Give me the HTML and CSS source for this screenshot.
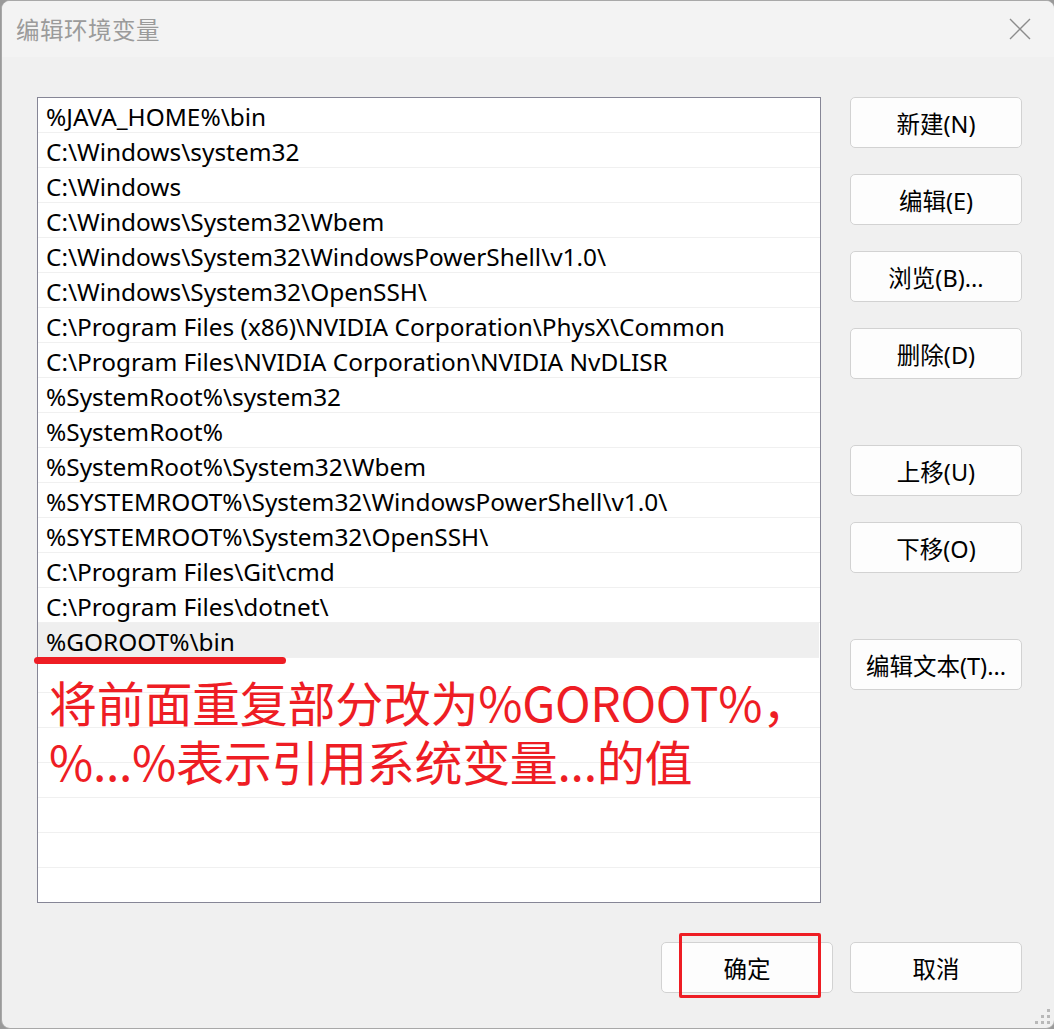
FILE: index.html
```html
<!DOCTYPE html>
<html lang="zh-CN">
<head>
<meta charset="utf-8">
<title>编辑环境变量</title>
<link rel="stylesheet" href="styles.css">
</head>
<body>
<div class="window">
  <div class="titlebar">
    <span class="title">编辑环境变量</span>
    <svg class="close" width="22" height="22" viewBox="0 0 22 22"><path d="M1 1 L21 21 M21 1 L1 21" stroke="#8c8c8c" stroke-width="1.4" fill="none"/></svg>
  </div>
  <div class="content">
    <div class="listwrap">
      <div class="list">
        <div class="row">%JAVA_HOME%\bin</div>
        <div class="row">C:\Windows\system32</div>
        <div class="row">C:\Windows</div>
        <div class="row">C:\Windows\System32\Wbem</div>
        <div class="row">C:\Windows\System32\WindowsPowerShell\v1.0\</div>
        <div class="row">C:\Windows\System32\OpenSSH\</div>
        <div class="row">C:\Program Files (x86)\NVIDIA Corporation\PhysX\Common</div>
        <div class="row">C:\Program Files\NVIDIA Corporation\NVIDIA NvDLISR</div>
        <div class="row">%SystemRoot%\system32</div>
        <div class="row">%SystemRoot%</div>
        <div class="row">%SystemRoot%\System32\Wbem</div>
        <div class="row">%SYSTEMROOT%\System32\WindowsPowerShell\v1.0\</div>
        <div class="row">%SYSTEMROOT%\System32\OpenSSH\</div>
        <div class="row">C:\Program Files\Git\cmd</div>
        <div class="row">C:\Program Files\dotnet\</div>
        <div class="row selected">%GOROOT%\bin</div>
        <div class="row"></div>
        <div class="row"></div>
        <div class="row"></div>
        <div class="row"></div>
        <div class="row"></div>
        <div class="row"></div>
        <div class="row last"></div>
      </div>
      <div class="underline"></div>
      <div class="note">
        <div class="note-line">将前面重复部分改为%GOROOT%，</div>
        <div class="note-line">%...%表示引用系统变量...的值</div>
      </div>
    </div>
    <div class="side">
      <button class="btn">新建(N)</button>
      <button class="btn">编辑(E)</button>
      <button class="btn">浏览(B)...</button>
      <button class="btn">删除(D)</button>
      <button class="btn group">上移(U)</button>
      <button class="btn">下移(O)</button>
      <button class="btn group">编辑文本(T)...</button>
    </div>
  </div>
  <div class="footer">
    <div class="okwrap">
      <button class="btn">确定</button>
      <div class="redbox"></div>
    </div>
    <button class="btn">取消</button>
  </div>
  <div class="grip">
    <i class="g13"></i>
    <i class="g22"></i><i class="g23"></i>
    <i class="g31"></i><i class="g32"></i><i class="g33"></i>
  </div>
</div>
</body>
</html>
```
FILE: styles.css
```css
* { box-sizing: border-box; }
html, body { margin: 0; padding: 0; }
body {
  width: 1054px;
  height: 1029px;
  background: #9a9a9a;
  font-family: "Noto Sans", "Noto Sans CJK SC", sans-serif;
  overflow: hidden;
}
.window {
  position: relative;
  width: 1054px;
  height: 1029px;
  margin-left: 1px;
  background: #f0f0f0;
  border: 1px solid #a8a8a8;
  border-radius: 9px;
  display: flex;
  flex-direction: column;
  overflow: hidden;
}
.titlebar {
  height: 56px;
  background: #f3f3f3;
  display: flex;
  align-items: center;
  justify-content: space-between;
  padding: 0 23px 0 14px;
}
.title {
  font-family: "Noto Sans CJK SC", sans-serif;
  font-size: 23.5px;
  color: #9b9b9b;
  letter-spacing: 0.5px;
}
.content {
  display: flex;
  padding: 40px 0 0 35px;
  gap: 29px;
}
.listwrap {
  position: relative;
  width: 784px;
}
.list {
  border: 1px solid #868696;
  background: #fff;
  height: 806px;
  overflow: hidden;
}
.row {
  height: 35px;
  border-bottom: 1px solid #f0f0f0;
  padding-left: 8px;
  font-size: 24.4px;
  line-height: 37px;
  color: #000;
  white-space: nowrap;
}
.row.last { border-bottom: none; }
.row.selected { background: #efefef; margin-right: 1px; }
.underline {
  position: absolute;
  left: -3px;
  top: 560px;
  width: 252px;
  height: 7px;
  background: #ee1d24;
  border-radius: 4px;
}
.note {
  position: absolute;
  left: 12px;
  top: 575px;
  display: flex;
  flex-direction: column;
  font-family: "Noto Sans CJK SC", sans-serif;
  font-size: 48px;
  color: #ee1d24;
  white-space: nowrap;
}
.note-line {
  height: 59px;
  line-height: 59px;
  letter-spacing: -0.3px;
}
.side {
  display: flex;
  flex-direction: column;
  gap: 26px;
}
.btn {
  width: 172px;
  height: 51px;
  background: #fdfdfd;
  border: 1px solid #d2d2d2;
  border-radius: 5px;
  font-family: "Noto Sans", "Noto Sans CJK SC", sans-serif;
  font-size: 23.5px;
  color: #000;
  padding: 0;
}
.side .btn.group { margin-top: 40px; }
.footer {
  display: flex;
  gap: 17px;
  padding: 39px 0 0 659px;
}
.okwrap { position: relative; }
.redbox {
  position: absolute;
  left: 18px;
  top: -9px;
  width: 142px;
  height: 65px;
  border: 3px solid #ee1d24;
  border-radius: 2px;
}
.grip {
  position: absolute;
  right: 4px;
  bottom: 4px;
  display: grid;
  grid-template-columns: repeat(3, 3px);
  grid-template-rows: repeat(3, 3px);
  gap: 3px;
}
.grip i { display: block; background: #b8b8b8; }
.g13 { grid-area: 1 / 3; }
.g22 { grid-area: 2 / 2; }
.g23 { grid-area: 2 / 3; }
.g31 { grid-area: 3 / 1; }
.g32 { grid-area: 3 / 2; }
.g33 { grid-area: 3 / 3; }
```
